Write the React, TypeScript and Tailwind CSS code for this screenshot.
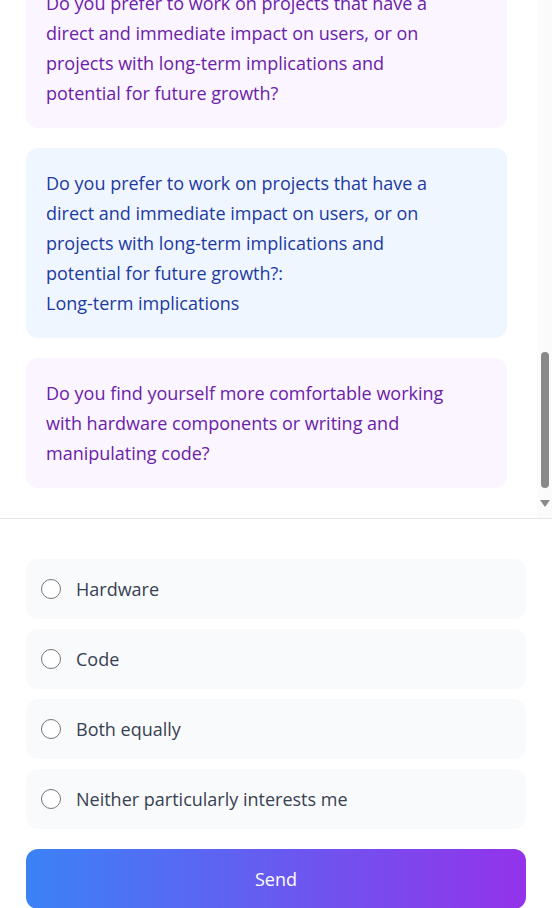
import React from "react";

const font = { fontFamily: '"Segoe UI", "Open Sans", "Noto Sans", sans-serif' };

function Bubble({ tone, lines }: { tone: "purple" | "blue"; lines: string[] }) {
  const cls =
    tone === "purple"
      ? "bg-[#faf5ff] text-[#6b21a8]"
      : "bg-[#eff6ff] text-[#1e3a9f]";
  return (
    <div className={`${cls} rounded-xl p-5 text-[18px] leading-[30px]`}>
      {lines.map((l, i) => (
        <div key={i} className="whitespace-nowrap">
          {l}
        </div>
      ))}
    </div>
  );
}

function Option({ label }: { label: string }) {
  return (
    <label className="flex h-[60px] items-center gap-[15px] rounded-xl bg-[#f9fafb] pl-[15px]">
      <span className="h-5 w-5 rounded-full border border-[#767676] bg-white" />
      <span className="text-[18px] text-[#374151]">{label}</span>
    </label>
  );
}

export default function App() {
  return (
    <div className="h-[908px] w-[552px] overflow-hidden bg-white" style={font}>
      <div className="flex h-[518px]">
        <div className="flex flex-1 flex-col justify-end gap-5 overflow-hidden pb-[30px] pl-[26px] pr-[30px]">
          <Bubble
            tone="purple"
            lines={[
              "Do you prefer to work on projects that have a",
              "direct and immediate impact on users, or on",
              "projects with long-term implications and",
              "potential for future growth?",
            ]}
          />
          <Bubble
            tone="blue"
            lines={[
              "Do you prefer to work on projects that have a",
              "direct and immediate impact on users, or on",
              "projects with long-term implications and",
              "potential for future growth?:",
              "Long-term implications",
            ]}
          />
          <Bubble
            tone="purple"
            lines={[
              "Do you find yourself more comfortable working",
              "with hardware components or writing and",
              "manipulating code?",
            ]}
          />
        </div>
        <div className="flex w-[15px] flex-col items-center bg-[#fbfbfb] pb-[10px]">
          <div className="flex-1" />
          <div className="h-[136px] w-[8px] rounded-full bg-[#8a8a8a]" />
          <svg width="10" height="8" viewBox="0 0 10 8" className="mt-[12px]">
            <path d="M0 0 L10 0 L5 7 Z" fill="#8a8a8a" />
          </svg>
        </div>
      </div>
      <div className="border-t border-[#e5e7eb] px-[26px] pt-10">
        <div className="flex flex-col gap-[10px]">
          <Option label="Hardware" />
          <Option label="Code" />
          <Option label="Both equally" />
          <Option label="Neither particularly interests me" />
        </div>
        <button className="mt-5 flex h-[60px] w-full items-center justify-center rounded-xl bg-[linear-gradient(to_right,#3b82f6,#9333ea)] text-[18px] text-white">
          Send
        </button>
      </div>
    </div>
  );
}
